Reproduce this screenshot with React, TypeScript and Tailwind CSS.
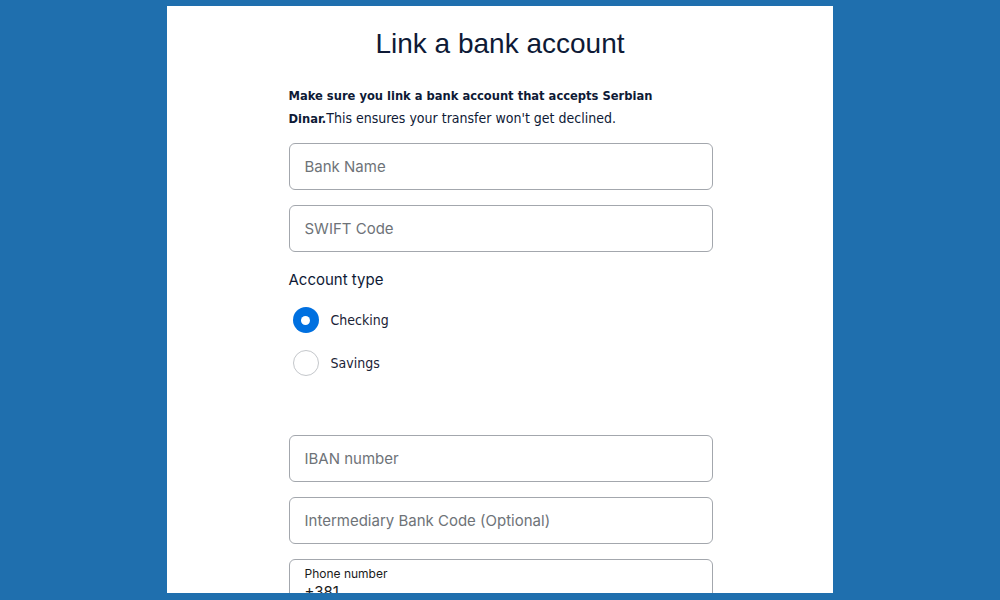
import React, { useState } from 'react';

const Field: React.FC<{ placeholder: string }> = ({ placeholder }) => (
  <input
    type="text"
    placeholder={placeholder}
    className="w-full h-[47px] rounded-[6px] border border-[#a3a7ad] bg-white px-[15px] text-[15px] text-[#1a1a1a] placeholder-[#6e7378] outline-none font-['Inter',sans-serif]"
  />
);

const Radio: React.FC<{ label: string; checked: boolean; onClick: () => void }> = ({ label, checked, onClick }) => (
  <button type="button" onClick={onClick} className="flex items-center gap-[12px] h-[28px] ml-[4px]">
    {checked ? (
      <span className="w-[26px] h-[26px] rounded-full bg-[#0070e0] flex items-center justify-center">
        <span className="w-[9px] h-[9px] rounded-full bg-white"></span>
      </span>
    ) : (
      <span className="w-[26px] h-[26px] rounded-full border border-[#c4c7cb] bg-white"></span>
    )}
    <span className="text-[14px] text-[#1b2336] font-['DejaVu_Sans_Condensed','DejaVu_Sans',sans-serif]">{label}</span>
  </button>
);

export default function App() {
  const [type, setType] = useState<'checking' | 'savings'>('checking');

  return (
    <div className="w-[1000px] h-[600px] bg-[#1f6fae] pt-[6px] overflow-hidden">
      <div className="mx-auto w-[666px] h-[587px] bg-white overflow-hidden">
        <h1 className="pt-[20px] text-center text-[28px] leading-[36px] text-[#0e1a36] font-['Liberation_Sans',Arial,sans-serif]">
          Link a bank account
        </h1>
        <div className="mx-auto w-[425px] pl-[1px]">
          {/* disclaimer, wrapped after "Serbian" like the original */}
          <div className="mt-[23px] text-[#0e1a36] font-['DejaVu_Sans_Condensed','DejaVu_Sans',sans-serif]">
            <p className="font-bold text-[12.8px] leading-[22px]">Make sure you link a bank account that accepts Serbian</p>
            <p className="text-[14px] leading-[22px]">
              <b className="text-[12.8px]">Dinar.</b>This ensures your transfer won't get declined.
            </p>
          </div>

          <div className="mt-[13px] flex flex-col gap-[15px]">
            <Field placeholder="Bank Name" />
            <Field placeholder="SWIFT Code" />
          </div>

          <div className="mt-[17px] text-[15px] leading-[22px] text-[#0e1a36] font-['Inter',sans-serif]">Account type</div>

          <div className="mt-[15px] flex flex-col gap-[15px]">
            <Radio label="Checking" checked={type === 'checking'} onClick={() => setType('checking')} />
            <Radio label="Savings" checked={type === 'savings'} onClick={() => setType('savings')} />
          </div>

          <div className="mt-[58px] flex flex-col gap-[15px]">
            <Field placeholder="IBAN number" />
            <Field placeholder="Intermediary Bank Code (Optional)" />
            <div className="w-full h-[60px] rounded-[6px] border border-[#a3a7ad] px-[15px] pt-[6px] font-['Inter',sans-serif]">
              <div className="text-[12px] leading-[16px] text-[#1a1a1a]">Phone number</div>
              <div className="text-[15px] leading-[20px] text-[#1a1a1a]">+381</div>
            </div>
          </div>
        </div>
      </div>
    </div>
  );
}
